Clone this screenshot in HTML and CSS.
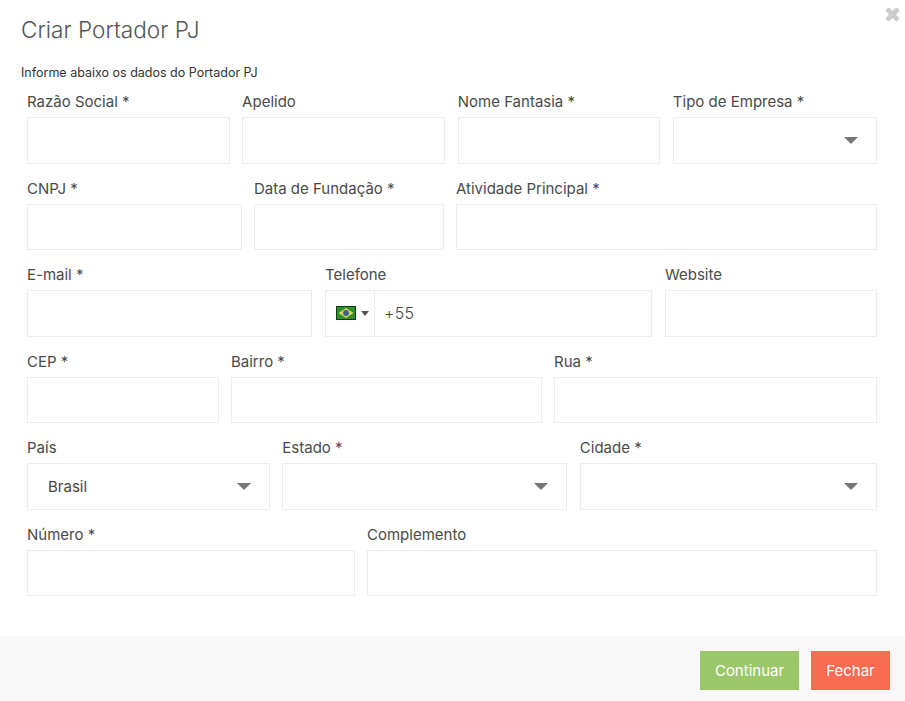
FILE: index.html
```
<!DOCTYPE html>
<html lang="pt-BR">
<head>
<meta charset="utf-8">
<title>Criar Portador PJ</title>
<link rel="stylesheet" href="styles.css">
</head>
<body>
<div class="modal">
  <button class="close" type="button" aria-label="Fechar">
    <svg width="15" height="15" viewBox="0 0 15 15"><path d="M1.8 3.6 3.6 1.8 7.5 5.5 11.4 1.8 13.2 3.6 9.5 7.5 13.2 11.4 11.4 13.2 7.5 9.5 3.6 13.2 1.8 11.4 5.5 7.5Z" fill="#ccc" stroke="#ccc" stroke-width="2.2" stroke-linejoin="round"/></svg>
  </button>
  <header class="head"><h1>Criar Portador PJ</h1></header>
  <p class="intro">Informe abaixo os dados do Portador PJ</p>
  <form class="form">
    <div class="row r1">
      <div class="field"><label>Razão Social *</label><div class="input"></div></div>
      <div class="field"><label>Apelido</label><div class="input"></div></div>
      <div class="field"><label>Nome Fantasia *</label><div class="input"></div></div>
      <div class="field"><label>Tipo de Empresa *</label><div class="input select"><i class="caret"></i></div></div>
    </div>
    <div class="row r2">
      <div class="field"><label>CNPJ *</label><div class="input"></div></div>
      <div class="field"><label>Data de Fundação *</label><div class="input"></div></div>
      <div class="field"><label>Atividade Principal *</label><div class="input"></div></div>
    </div>
    <div class="row r3">
      <div class="field"><label>E-mail *</label><div class="input"></div></div>
      <div class="field"><label>Telefone</label>
        <div class="input phone">
          <div class="flag-box">
            <svg class="flag" width="20" height="14" viewBox="0 0 20 14"><rect width="20" height="14" fill="#0d3f10"/><rect x="1" y="1" width="18" height="12" fill="#2f8f30"/><path d="M10 2 17.5 7 10 12 2.5 7Z" fill="#dcd24e"/><circle cx="10" cy="7" r="2.9" fill="#3a5ca0"/></svg>
            <i class="mini-caret"></i>
          </div>
          <span class="dial">+55</span>
        </div>
      </div>
      <div class="field"><label>Website</label><div class="input"></div></div>
    </div>
    <div class="row r4">
      <div class="field"><label>CEP *</label><div class="input"></div></div>
      <div class="field"><label>Bairro *</label><div class="input"></div></div>
      <div class="field"><label>Rua *</label><div class="input"></div></div>
    </div>
    <div class="row r5">
      <div class="field"><label>País</label><div class="input select"><span class="value">Brasil</span><i class="caret"></i></div></div>
      <div class="field"><label>Estado *</label><div class="input select"><i class="caret"></i></div></div>
      <div class="field"><label>Cidade *</label><div class="input select"><i class="caret"></i></div></div>
    </div>
    <div class="row r6">
      <div class="field"><label>Número *</label><div class="input"></div></div>
      <div class="field"><label>Complemento</label><div class="input"></div></div>
    </div>
  </form>
  <footer class="foot">
    <button class="btn ok" type="button">Continuar</button>
    <button class="btn no" type="button">Fechar</button>
  </footer>
</div>
</body>
</html>
```
FILE: styles.css
```
* { box-sizing: border-box; }
html, body { margin: 0; height: 100%; }
body { background: #fff; font-family: Inter, "Liberation Sans", sans-serif; color: #444; overflow: hidden; }
.modal { position: relative; width: 905px; height: 701px; display: flex; flex-direction: column; }
.close { position: absolute; top: 7px; right: 5px; border: 0; padding: 0; background: none; line-height: 0; }
.head { padding: 16px 21px 0; }
h1 { margin: 0; font-size: 22.6px; line-height: 27px; font-weight: 300; color: #555; }
.intro { margin: 22px 21px 0; font-size: 12.5px; line-height: 15px; color: #333; }
.form { padding: 12px 28px 0 27px; display: flex; flex-direction: column; gap: 15px; }
.row { display: grid; column-gap: 12px; }
.r1 { grid-template-columns: 202.5fr 203fr 202.5fr 204fr; column-gap: 12.5px; }
.r2 { grid-template-columns: 215fr 190fr 421fr; }
.r3 { grid-template-columns: 285fr 327fr 212fr; column-gap: 13px; }
.r4 { grid-template-columns: 192fr 311fr 323fr; }
.r5 { grid-template-columns: 242.8fr 285fr 297.2fr; column-gap: 12.5px; }
.r6 { grid-template-columns: 328fr 510fr; }
.field { min-width: 0; }
label { display: block; font-size: 15px; line-height: 18px; height: 25px; padding-top: 1px; color: #4a4a4a; }
.input { height: 46.5px; border: 1px solid #ececec; background: #fff; display: flex; align-items: center; font-size: 15px; color: #444; }
.select { justify-content: space-between; padding: 0 18px 0 20px; }
.select .caret { margin-left: auto; }
.caret { width: 0; height: 0; border-left: 7px solid transparent; border-right: 7px solid transparent; border-top: 7px solid #777; }
.flag-box { width: 49px; height: 100%; display: flex; align-items: center; padding-left: 10px; gap: 5px; border-right: 1px solid #ececec; }
.mini-caret { width: 0; height: 0; border-left: 4px solid transparent; border-right: 4px solid transparent; border-top: 5px solid #555; }
.dial { padding-left: 9px; font-size: 16px; font-weight: 300; letter-spacing: 0.3px; }
.foot { margin-top: auto; height: 65px; background: #f8f8f8; display: flex; justify-content: flex-end; gap: 12px; padding: 15px 15px 0 0; }
.btn { height: 39px; border: 0; color: #fff; font: 400 15px Inter, "Liberation Sans", sans-serif; }
.ok { width: 99px; background: #9ac768; }
.no { width: 79px; background: #fb6c52; }
```
